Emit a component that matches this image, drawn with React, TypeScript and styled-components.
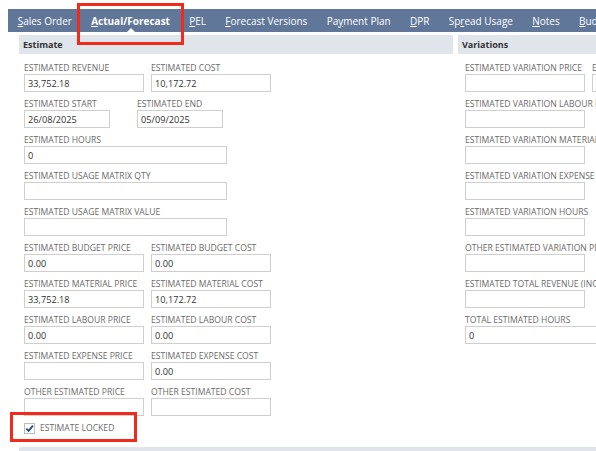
import React from "react";
import styled, { createGlobalStyle } from "styled-components";

const Global = createGlobalStyle`
  html, body { margin: 0; padding: 0; background: #fff; overflow: hidden; }
  body { font-family: "Open Sans", "Liberation Sans", sans-serif; }
`;

const Page = styled.div`
  position: relative;
  width: 596px;
  height: 451px;
  overflow: hidden;
  padding-top: 9px;
  box-sizing: border-box;
`;

const TabBar = styled.div`
  display: flex;
  align-items: stretch;
  height: 23px;
  margin-left: 8px;
  width: 700px;
  background: #607799;
`;

const Tab = styled.div<{ $active?: boolean }>`
  position: relative;
  display: flex;
  align-items: center;
  padding: 0 9.65px;
  color: #fff;
  font-size: 10px;
  font-weight: ${(p) => (p.$active ? 700 : 400)};
  white-space: nowrap;
  &::after {
    content: "";
    display: ${(p) => (p.$active ? "block" : "none")};
    position: absolute;
    bottom: 0;
    left: 50%;
    margin-left: -4px;
    border-left: 4px solid transparent;
    border-right: 4px solid transparent;
    border-bottom: 4px solid #fff;
  }
`;

const Key = styled.span`
  text-decoration: underline;
  text-underline-offset: 1px;
`;

const Content = styled.div`
  display: grid;
  grid-template-columns: 434px 300px;
  column-gap: 5px;
  margin-top: 3px;
  margin-left: 19px;
  width: 740px;
`;

const Section = styled.div``;

const SectionHeader = styled.div`
  height: 19px;
  display: flex;
  align-items: center;
  padding-left: 4px;
  background: #e0e4eb;
  color: #333;
  font-size: 9px;
  font-weight: 700;
`;

const Fields = styled.div<{ $pad: number }>`
  display: flex;
  flex-direction: column;
  gap: 5px;
  padding: 7px 0 0 ${(p) => p.$pad}px;
`;

const Row = styled.div`
  display: flex;
  gap: 7px;
`;

const FieldBox = styled.div<{ $after?: number }>`
  display: flex;
  flex-direction: column;
  margin-right: ${(p) => p.$after ?? 0}px;
`;

const Label = styled.div`
  height: 13px;
  line-height: 15px;
  font-size: 8.6px;
  color: #6b6b6b;
  text-transform: uppercase;
  white-space: nowrap;
`;

const Input = styled.div<{ $w: number }>`
  width: ${(p) => p.$w}px;
  height: 18px;
  box-sizing: border-box;
  border: 1px solid #cfcfcf;
  background: #fff;
  padding-left: 3px;
  display: flex;
  align-items: center;
  font-size: 9.2px;
  color: #333;
`;

const CheckRow = styled.div`
  display: flex;
  align-items: center;
  gap: 5px;
  margin-top: 1px;
  height: 12px;
`;

const Box = styled.div`
  width: 11px;
  height: 11px;
  box-sizing: border-box;
  border: 1px solid #bdbdbd;
  background: #fff;
  display: flex;
  align-items: center;
  justify-content: center;
`;

const CheckLabel = styled.span`
  font-size: 8.6px;
  color: #6b6b6b;
`;

const BottomBar = styled.div`
  position: absolute;
  left: 19px;
  top: 447px;
  width: 600px;
  height: 10px;
  background: #e0e4eb;
`;

const Highlight = styled.div<{ $x: number; $y: number; $w: number; $h: number }>`
  position: absolute;
  left: ${(p) => p.$x}px;
  top: ${(p) => p.$y}px;
  width: ${(p) => p.$w}px;
  height: ${(p) => p.$h}px;
  box-sizing: border-box;
  border: 3px solid #f22a1c;
  pointer-events: none;
`;

type F = { label: string; value?: string; w?: number; after?: number };

const Field = ({ label, value, w = 120, after }: F) => (
  <FieldBox $after={after}>
    <Label>{label}</Label>
    <Input $w={w}>{value}</Input>
  </FieldBox>
);

const estimateRows: F[][] = [
  [
    { label: "Estimated Revenue", value: "33,752.18" },
    { label: "Estimated Cost", value: "10,172.72" },
  ],
  [
    { label: "Estimated Start", value: "26/08/2025", w: 86, after: 20 },
    { label: "Estimated End", value: "05/09/2025", w: 86 },
  ],
  [{ label: "Estimated Hours", value: "0", w: 203 }],
  [{ label: "Estimated Usage Matrix Qty", w: 203 }],
  [{ label: "Estimated Usage Matrix Value", w: 203 }],
  [
    { label: "Estimated Budget Price", value: "0.00" },
    { label: "Estimated Budget Cost", value: "0.00" },
  ],
  [
    { label: "Estimated Material Price", value: "33,752.18" },
    { label: "Estimated Material Cost", value: "10,172.72" },
  ],
  [
    { label: "Estimated Labour Price", value: "0.00" },
    { label: "Estimated Labour Cost", value: "0.00" },
  ],
  [
    { label: "Estimated Expense Price" },
    { label: "Estimated Expense Cost", value: "0.00" },
  ],
  [{ label: "Other Estimated Price" }, { label: "Other Estimated Cost" }],
];

const variationRows: F[][] = [
  [
    { label: "Estimated Variation Price" },
    { label: "Estimated Variation Cost" },
  ],
  [{ label: "Estimated Variation Labour Price" }],
  [{ label: "Estimated Variation Material Price" }],
  [{ label: "Estimated Variation Expense Price" }],
  [{ label: "Estimated Variation Hours" }],
  [{ label: "Other Estimated Variation Price" }],
  [{ label: "Estimated Total Revenue (Incl. Variations)" }],
  [{ label: "Total Estimated Hours", value: "0", w: 203 }],
];

const renderRows = (rows: F[][]) =>
  rows.map((r, i) => (
    <Row key={i}>
      {r.map((f) => (
        <Field key={f.label} {...f} />
      ))}
    </Row>
  ));

export default function App() {
  return (
    <Page>
      <Global />
      <TabBar>
        <Tab><span><Key>S</Key>ales Order</span></Tab>
        <Tab $active><span><Key>A</Key>ctual/Forecast</span></Tab>
        <Tab><span><Key>P</Key>EL</span></Tab>
        <Tab><span><Key>F</Key>orecast Versions</span></Tab>
        <Tab><span>Pa<Key>y</Key>ment Plan</span></Tab>
        <Tab><span><Key>D</Key>PR</span></Tab>
        <Tab><span>Sp<Key>r</Key>ead Usage</span></Tab>
        <Tab><span><Key>N</Key>otes</span></Tab>
        <Tab><span><Key>B</Key>udget</span></Tab>
      </TabBar>
      <Content>
        <Section>
          <SectionHeader>Estimate</SectionHeader>
          <Fields $pad={5}>
            {renderRows(estimateRows)}
            <CheckRow>
              <Box>
                <svg width="9" height="9" viewBox="0 0 10 10">
                  <path d="M1.5 5.2 L4 7.6 L8.8 1.8" fill="none" stroke="#1f4a86" strokeWidth="2" />
                </svg>
              </Box>
              <CheckLabel>ESTIMATE LOCKED</CheckLabel>
            </CheckRow>
          </Fields>
        </Section>
        <Section>
          <SectionHeader>Variations</SectionHeader>
          <Fields $pad={7}>{renderRows(variationRows)}</Fields>
        </Section>
      </Content>
      <BottomBar />
      <Highlight $x={77} $y={3} $w={107} $h={42} />
      <Highlight $x={10} $y={412} $w={127} $h={30} />
    </Page>
  );
}
